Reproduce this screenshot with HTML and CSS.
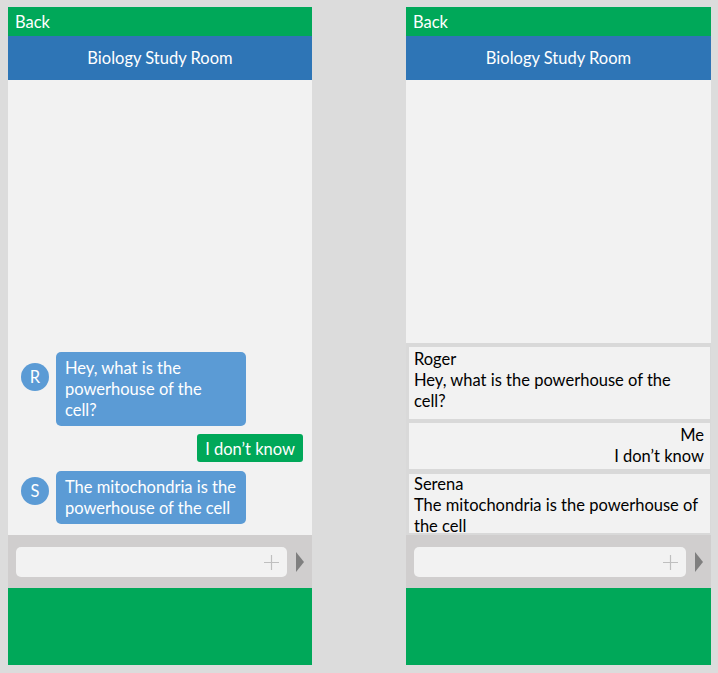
FILE: index.html
```html
<!DOCTYPE html>
<html lang="en">
<head>
<meta charset="utf-8">
<title>Biology Study Room</title>
<link rel="stylesheet" href="styles.css">
</head>
<body>
<div class="screens">
  <section class="phone phone-a">
    <div class="topbar">Back</div>
    <div class="titlebar">Biology Study Room</div>
    <div class="chat">
      <div class="row">
        <div class="avatar avatar-r">R</div>
        <div class="bubble">Hey, what is the<br>powerhouse of the<br>cell?</div>
      </div>
      <div class="row row-me">
        <div class="bubble-me">I don’t know</div>
      </div>
      <div class="row">
        <div class="avatar avatar-s">S</div>
        <div class="bubble">The mitochondria is the<br>powerhouse of the cell</div>
      </div>
    </div>
    <div class="inputbar">
      <div class="field">
        <svg class="plus" width="15" height="15" viewBox="0 0 15 15"><path d="M7.5 0V15M0 7.5H15" stroke="#bfbfbf" stroke-width="1.2" fill="none"/></svg>
      </div>
      <svg class="send" width="8" height="20" viewBox="0 0 8 20"><path d="M0 0L8 10L0 20Z" fill="#7f7f7f"/></svg>
    </div>
    <div class="footer"></div>
  </section>

  <section class="phone phone-b">
    <div class="topbar">Back</div>
    <div class="titlebar">Biology Study Room</div>
    <div class="chat-list">
      <div class="spacer"></div>
      <div class="msg msg-1">
        <div>Roger</div>
        <div>Hey, what is the powerhouse of the cell?</div>
      </div>
      <div class="msg msg-2 msg-right">
        <div>Me</div>
        <div>I don’t know</div>
      </div>
      <div class="msg msg-3">
        <div>Serena</div>
        <div>The mitochondria is the powerhouse of the cell</div>
      </div>
    </div>
    <div class="inputbar">
      <div class="field">
        <svg class="plus" width="15" height="15" viewBox="0 0 15 15"><path d="M7.5 0V15M0 7.5H15" stroke="#bfbfbf" stroke-width="1.2" fill="none"/></svg>
      </div>
      <svg class="send" width="8" height="20" viewBox="0 0 8 20"><path d="M0 0L8 10L0 20Z" fill="#7f7f7f"/></svg>
    </div>
    <div class="footer"></div>
  </section>
</div>
</body>
</html>
```

FILE: styles.css
```css
* { box-sizing: border-box; }
html, body { margin: 0; padding: 0; }
body {
  background: #dcdcdc;
  font-family: "Lato", "Liberation Sans", sans-serif;
  font-size: 16.5px;
  line-height: 21px;
  width: 718px;
  height: 673px;
  overflow: hidden;
}
.screens {
  display: flex;
  gap: 94px;
  padding: 7px 0 0 8px;
}
.phone {
  display: flex;
  flex-direction: column;
  height: 658px;
}
.phone-a { width: 304px; }
.phone-b { width: 305px; }

.topbar {
  height: 29px;
  background: #00a859;
  color: #fff;
  padding: 5px 0 0 7px;
}
.titlebar {
  height: 44px;
  background: #2e75b6;
  color: #fff;
  display: flex;
  align-items: center;
  justify-content: center;
  padding-top: 1px;
}

.chat {
  height: 455px;
  background: #f2f2f2;
  display: flex;
  flex-direction: column;
  justify-content: flex-end;
  padding: 0 9px 11px 13px;
}
.row {
  display: flex;
  align-items: flex-start;
  gap: 7px;
}
.row + .row { margin-top: 8px; }
.row-me { justify-content: flex-end; }
.row-me + .row { margin-top: 9px; }
.avatar {
  width: 28px;
  height: 28px;
  border-radius: 50%;
  background: #5b9bd5;
  color: #fff;
  display: flex;
  align-items: center;
  justify-content: center;
  flex: none;
}
.avatar-r { margin-top: 11px; }
.avatar-s { margin-top: 6px; }
.bubble {
  width: 190px;
  background: #5b9bd5;
  color: #fff;
  border-radius: 5px;
  padding: 6px 8px 5px 9px;
}
.bubble-me {
  height: 28px;
  background: #00a859;
  color: #fff;
  border-radius: 3px;
  padding: 5px 8px 0 8px;
}

.chat-list {
  height: 455px;
  background: #d9d9d9;
  display: flex;
  flex-direction: column;
}
.spacer {
  flex: 1;
  background: #f2f2f2;
}
.msg {
  background: #f2f2f2;
  color: #000;
  margin: 4px 1px 0 3px;
  padding: 2px 7px 0 5px;
  flex: none;
}
.msg-1 { height: 72px; }
.msg-2 { height: 46px; }
.msg-3 { height: 59px; margin-top: 5px; margin-bottom: 2px; padding-top: 0; }
.msg-right { text-align: right; padding-right: 6px; }

.inputbar {
  height: 53px;
  background: #d0cece;
  display: flex;
  align-items: center;
  padding: 1px 0 0 8px;
  gap: 9px;
}
.field {
  width: 271px;
  height: 30px;
  background: #f2f2f2;
  border-radius: 5px;
  display: flex;
  align-items: center;
  justify-content: flex-end;
  padding-right: 8px;
}
.phone-b .field { width: 272px; }
.send { flex: none; }
.footer {
  flex: 1;
  background: #00a859;
}
```
